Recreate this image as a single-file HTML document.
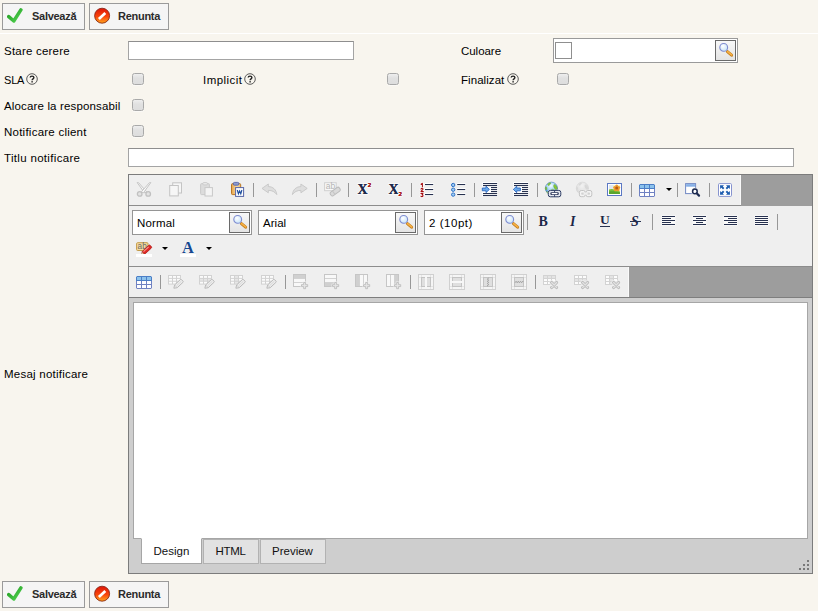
<!DOCTYPE html>
<html>
<head>
<meta charset="utf-8">
<title>Stare cerere</title>
<style>
html,body{margin:0;padding:0;}
body{width:818px;height:611px;overflow:hidden;background:#f8f5ee;position:relative;font-family:"Liberation Sans",sans-serif;font-size:12px;color:#000;}
.abs{position:absolute;}
.hr{position:absolute;left:0;top:33px;width:818px;height:1px;background:#fff;}
.btn{position:absolute;box-sizing:border-box;height:27px;border:1px solid #9a9a9a;background:#f5f5f5;}
.btn span{position:absolute;top:5px;letter-spacing:-0.28px;font-weight:bold;font-size:11px;line-height:14px;color:#2b2b2b;white-space:nowrap;}
.btn svg{position:absolute;}
.lbl{position:absolute;left:4px;font-size:11.5px;line-height:14px;white-space:nowrap;color:#000;}
.inp{position:absolute;box-sizing:border-box;height:19px;border:1px solid #a4a4a4;border-top-color:#8e8e8e;background:#fff;}
.cb{position:absolute;box-sizing:border-box;width:12px;height:12px;border:1px solid #a9a9a9;border-radius:2.5px;background:linear-gradient(#eeeeee,#e1e1e1 40%,#dddddd);box-shadow:0 1px 0 rgba(255,255,255,.45);}
.help{position:absolute;width:12px;height:12px;}
.combo{position:absolute;box-sizing:border-box;height:25px;border:1px solid #959595;background:#fff;}
.combo .t{position:absolute;left:4px;top:5px;font-size:11.5px;line-height:14px;white-space:nowrap;color:#000;}
.cbtn{position:absolute;right:1px;top:1px;box-sizing:border-box;width:21px;height:21px;border:1px solid #6a6a6a;background:linear-gradient(#f8f8f8,#e4e4e4);}
.cbtn svg{position:absolute;left:0;top:0;}
#ed{position:absolute;left:128px;top:174px;width:683px;height:398px;border:1px solid #7c7c7c;background:#9d9d9d;}
.tb{position:absolute;left:0;background:#efefef;}
.sep{position:absolute;width:1px;height:14px;background:#979797;}
.ic{position:absolute;width:16px;height:16px;overflow:visible;}
.arr{position:absolute;width:0;height:0;border-left:3px solid transparent;border-right:3px solid transparent;border-top:3px solid #000;}
.tab{position:absolute;box-sizing:border-box;font-size:11.5px;line-height:14px;color:#111;}
.tab span{position:absolute;top:6px;white-space:nowrap;}
.g{font-family:"Liberation Serif",serif;font-weight:bold;position:absolute;white-space:nowrap;color:#1c2748;text-shadow:0 0 1px #fff,0 0 1px #fff;}
</style>
</head>
<body>
<!-- shared symbols -->
<svg width="0" height="0" style="position:absolute">
  <defs>
    <linearGradient id="gk" x1="0" y1="0" x2="1" y2="1"><stop offset="0" stop-color="#1d9a1d"/><stop offset="1" stop-color="#55d455"/></linearGradient>
    <linearGradient id="gr" x1="0" y1="0" x2="0" y2="1"><stop offset="0" stop-color="#dc1408"/><stop offset=".55" stop-color="#f8450c"/><stop offset="1" stop-color="#ffa51e"/></linearGradient>
    <radialGradient id="lens" cx=".4" cy=".35" r=".7"><stop offset="0" stop-color="#ffffff"/><stop offset="1" stop-color="#c4e2f8"/></radialGradient>
    <g id="mag">
      <path d="M11.4 10.7 L15.6 14.2" stroke="#c27c1c" stroke-width="3" stroke-linecap="round"/>
      <path d="M11.6 10.6 L15.6 13.9" stroke="#f7b144" stroke-width="1.7" stroke-linecap="round"/>
      <circle cx="7.7" cy="6.4" r="3.9" fill="url(#lens)" stroke="#7f8bd0" stroke-width="1.1"/>
    </g>
    <g id="hlp">
      <circle cx="6" cy="6" r="5.3" fill="none" stroke="#4a4a4a" stroke-width=".9"/>
      <path d="M4.2 4.6 C4.2 2.6 7.9 2.6 7.9 4.6 C7.9 5.9 6.1 5.9 6.1 7.3" fill="none" stroke="#222" stroke-width="1.4"/>
      <rect x="5.4" y="8.1" width="1.4" height="1.4" fill="#222"/>
    </g>
    <g id="ok"><path d="M1.7 9.7 L6.8 14 L13.9 2.9" fill="none" stroke="url(#gk)" stroke-width="3.5" stroke-linecap="round" stroke-linejoin="round"/></g>
    <g id="no"><circle cx="9.1" cy="8.7" r="7.5" fill="url(#gr)" stroke="#7c1a0c" stroke-width=".8"/><path d="M5.9 12 L12.3 5.9" stroke="#fff" stroke-width="2.7"/></g>
  </defs>
</svg>

<!-- top buttons -->
<div class="btn" style="left:2px;top:3px;width:83px;">
  <svg width="18" height="18" viewBox="0 0 18 18" style="left:4px;top:3px;"><use href="#ok"/></svg>
  <span style="left:29px;">Salvează</span>
</div>
<div class="btn" style="left:89px;top:3px;width:80px;">
  <svg width="18" height="18" viewBox="0 0 18 18" style="left:3px;top:3px;"><use href="#no"/></svg>
  <span style="left:28px;">Renunta</span>
</div>
<div class="hr"></div>

<!-- form rows -->
<div class="lbl" style="top:44px;letter-spacing:0.21px;">Stare cerere</div>
<div class="inp" style="left:128px;top:41px;width:226px;"></div>
<div class="lbl" style="left:461px;top:44px;letter-spacing:-0.04px;">Culoare</div>
<div class="combo" style="left:553px;top:38px;width:185px;border-color:#9a9a9a;">
  <div class="abs" style="left:1px;top:3px;width:17px;height:17px;box-sizing:border-box;border:1px solid #8f8f8f;background:#fff;"></div>
  <div class="cbtn"><svg width="19" height="19" viewBox="0 0 19 19"><use href="#mag"/></svg></div>
</div>

<div class="lbl" style="top:73px;font-size:11px;letter-spacing:-0.2px;">SLA</div>
<svg class="help" style="left:26px;top:73px;" viewBox="0 0 12 12"><use href="#hlp"/></svg>
<div class="cb" style="left:132px;top:73px;"></div>
<div class="lbl" style="left:203px;top:73px;letter-spacing:0.45px;">Implicit</div>
<svg class="help" style="left:244px;top:73px;" viewBox="0 0 12 12"><use href="#hlp"/></svg>
<div class="cb" style="left:387px;top:73px;"></div>
<div class="lbl" style="left:461px;top:73px;letter-spacing:0.06px;">Finalizat</div>
<svg class="help" style="left:507px;top:73px;" viewBox="0 0 12 12"><use href="#hlp"/></svg>
<div class="cb" style="left:557px;top:73px;"></div>

<div class="lbl" style="top:99px;letter-spacing:0.15px;">Alocare la responsabil</div>
<div class="cb" style="left:132px;top:99px;"></div>
<div class="lbl" style="top:125px;letter-spacing:0.24px;">Notificare client</div>
<div class="cb" style="left:132px;top:125px;"></div>
<div class="lbl" style="top:151px;letter-spacing:0.32px;">Titlu notificare</div>
<div class="inp" style="left:128px;top:148px;width:666px;"></div>
<div class="lbl" style="top:367px;letter-spacing:0.23px;">Mesaj notificare</div>

<!-- editor -->
<div id="ed">
  <div class="tb" style="top:0;width:612px;height:30px;box-shadow:inset -1px 0 0 #fafafa;"></div>
  <div class="abs" style="left:0;top:30px;width:612px;height:1px;background:#8c8c8c;"></div>
  <div class="tb" style="top:31px;width:683px;height:60px;"></div>
  <div class="abs" style="left:0;top:91px;width:683px;height:1px;background:#8c8c8c;"></div>
  <div class="tb" style="top:92px;width:500px;height:30px;box-shadow:inset -1px 0 0 #fafafa;"></div>
  <div class="abs" style="left:0;top:122px;width:683px;height:1px;background:#7e7e7e;"></div>
  <div class="abs" style="left:0;top:123px;width:683px;height:275px;background:#cecece;"></div>
  <div class="abs" style="left:4px;top:127px;width:673px;height:235px;border:1px solid #a6a6a6;background:#fff;"></div>
<svg class="ic" style="left:7px;top:7px;width:16px;height:16px" viewBox="0 0 16 16"><g fill="#fbfbfb" stroke="#c4c4c4" stroke-width="1" stroke-linejoin="round">
<path d="M1.2 .6 L2.4 .5 L10.6 9.8 L8.6 10.9 Z"/><path d="M14.8 .6 L13.6 .5 L5.4 9.8 L7.4 10.9 Z"/>
<circle cx="3.7" cy="11.9" r="2.3" stroke-width="1.3" stroke="#c0c0c0" fill="#e4e4e4"/><circle cx="12.2" cy="11.9" r="2.3" stroke-width="1.3" stroke="#c0c0c0" fill="#e4e4e4"/></g>
<circle cx="3.7" cy="11.9" r=".9" fill="#e2e2e2"/><circle cx="12.2" cy="11.9" r=".9" fill="#e2e2e2"/></svg>
<svg class="ic" style="left:39px;top:7px;width:16px;height:16px" viewBox="0 0 16 16"><g fill="#f6f6f6" stroke="#c4c4c4" stroke-width="1"><rect x="4.7" y=".8" width="8.8" height="10.2"/><rect x="1.7" y="3.5" width="8.6" height="10.4"/></g></svg>
<svg class="ic" style="left:70px;top:7px;width:16px;height:16px" viewBox="0 0 16 16"><rect x="1.6" y="1.6" width="8.8" height="11" rx="1" fill="#dcdcdc" stroke="#cbcbcb"/>
<rect x="3.8" y=".5" width="4.6" height="2.4" rx="1" fill="#e8e8e8" stroke="#c8c8c8" stroke-width=".8"/>
<rect x="6" y="5.6" width="7.4" height="8.4" fill="#f4f4f4" stroke="#c8c8c8"/></svg>
<svg class="ic" style="left:101px;top:7px;width:16px;height:16px" viewBox="0 0 16 16"><defs><linearGradient id="pw" x1="0" y1="0" x2="1" y2="0"><stop offset="0" stop-color="#e6a44a"/><stop offset=".6" stop-color="#f9dca4"/><stop offset="1" stop-color="#efc070"/></linearGradient></defs>
<rect x="1.5" y="1.6" width="9.2" height="11" rx="1.2" fill="url(#pw)" stroke="#b97724"/>
<rect x="3.3" y=".4" width="5.6" height="2.8" rx="1.2" fill="#8d9bd0" stroke="#5664a8" stroke-width=".9"/>
<rect x="5.6" y="5.6" width="8" height="8.8" fill="#fff" stroke="#5665a7"/>
<path d="M7.3 8 L8.4 11.7 L9.6 8.9 L10.8 11.7 L11.9 8" fill="none" stroke="#1f4f9f" stroke-width="1.15" stroke-linejoin="miter"/></svg>
<svg class="ic" style="left:132px;top:7px;width:16px;height:16px" viewBox="0 0 16 16"><path d="M1 6.4 L7.3 2 L7.3 4.6 C12 4.6 15.2 7.6 15.8 12.6 C13.6 9.6 11.2 8.4 7.3 8.4 L7.3 10.8 Z" fill="#dedede" stroke="#c6c6c6" stroke-width=".9" stroke-linejoin="round"/></svg>
<svg class="ic" style="left:163px;top:7px;width:16px;height:16px" viewBox="0 0 16 16"><path d="M15.2 6.4 L8.9 2 L8.9 4.6 C4.2 4.6 1 7.6 .4 12.6 C2.6 9.6 5 8.4 8.9 8.4 L8.9 10.8 Z" fill="#dedede" stroke="#c6c6c6" stroke-width=".9" stroke-linejoin="round"/></svg>
<svg class="ic" style="left:195px;top:7px;width:16px;height:16px" viewBox="0 0 16 16"><rect x=".6" y=".7" width="11.6" height="8" fill="#f8f8f8" stroke="#d0d0d0"/>
<text x="1.8" y="7.2" font-family="Liberation Sans" font-size="8.5" fill="#b4b4b4">ab</text>
<g transform="rotate(-36 11.2 9.6)"><rect x="5.7" y="7.4" width="11" height="4.4" rx="1.6" fill="#dadada" stroke="#bcbcbc"/><path d="M9.4 7.5 V11.7" stroke="#c4c4c4"/></g></svg>
<svg class="ic" style="left:228px;top:7px;width:16px;height:16px" viewBox="0 0 16 16"><text x=".4" y="12" font-family="Liberation Serif" font-weight="bold" font-size="14" fill="#1f2b4c" stroke="#fff" stroke-width="1.6" paint-order="stroke" stroke-opacity=".8">X</text>
<text x=".4" y="12" font-family="Liberation Serif" font-weight="bold" font-size="14" fill="#1f2b4c">X</text>
<text x="10.8" y="5.4" font-family="Liberation Sans" font-weight="bold" font-size="6.2" fill="#a50f12" stroke="#fff" stroke-width="1.4" paint-order="stroke" stroke-opacity=".8">2</text>
<text x="10.8" y="5.4" font-family="Liberation Sans" font-weight="bold" font-size="6.2" fill="#a50f12">2</text></svg>
<svg class="ic" style="left:259px;top:7px;width:16px;height:16px" viewBox="0 0 16 16"><text x=".4" y="12" font-family="Liberation Serif" font-weight="bold" font-size="14" fill="#1f2b4c" stroke="#fff" stroke-width="1.6" paint-order="stroke" stroke-opacity=".8">X</text>
<text x=".4" y="12" font-family="Liberation Serif" font-weight="bold" font-size="14" fill="#1f2b4c">X</text>
<text x="10.6" y="14.3" font-family="Liberation Sans" font-weight="bold" font-size="6.2" fill="#a50f12" stroke="#fff" stroke-width="1.4" paint-order="stroke" stroke-opacity=".8">2</text>
<text x="10.6" y="14.3" font-family="Liberation Sans" font-weight="bold" font-size="6.2" fill="#a50f12">2</text></svg>
<svg class="ic" style="left:291px;top:7px;width:16px;height:16px" viewBox="0 0 16 16"><rect x="4.4" y="1" width="9.399999999999999" height="3" fill="#fff" rx="1"/><rect x="4.4" y="6" width="9.399999999999999" height="3" fill="#fff" rx="1"/><rect x="4.4" y="11" width="9.399999999999999" height="3" fill="#fff" rx="1"/><rect x="5" y="2" width="8.2" height="1.1" fill="#27314f"/><rect x="5" y="7" width="8.2" height="1.1" fill="#27314f"/><rect x="5" y="12" width="8.2" height="1.1" fill="#27314f"/><g fill="none" stroke="#ffffff" stroke-width="2.4" stroke-linejoin="round" stroke-linecap="square"><path d="M1.1 2.2 L2.4 1.3 V4.6"/><path d="M1 7 C1.2 5.9 3.1 5.9 3.1 7.1 C3.1 8 1 8.6 1 9.6 H3.2"/><path d="M1 11.4 H3 L2 12.7 C3.4 12.7 3.4 14.6 2 14.6 C1.5 14.6 1.2 14.5 .9 14.2"/></g><g fill="none" stroke="#a50f12" stroke-width="1.05" stroke-linejoin="round" stroke-linecap="square"><path d="M1.1 2.2 L2.4 1.3 V4.6"/><path d="M1 7 C1.2 5.9 3.1 5.9 3.1 7.1 C3.1 8 1 8.6 1 9.6 H3.2"/><path d="M1 11.4 H3 L2 12.7 C3.4 12.7 3.4 14.6 2 14.6 C1.5 14.6 1.2 14.5 .9 14.2"/></g></svg>
<svg class="ic" style="left:322px;top:7px;width:16px;height:16px" viewBox="0 0 16 16"><rect x="5.6000000000000005" y="1" width="9.2" height="3" fill="#fff" rx="1"/><rect x="5.6000000000000005" y="6" width="9.2" height="3" fill="#fff" rx="1"/><rect x="5.6000000000000005" y="11" width="9.2" height="3" fill="#fff" rx="1"/><rect x="6.2" y="2" width="7.999999999999999" height="1.1" fill="#27314f"/><rect x="6.2" y="7" width="7.999999999999999" height="1.1" fill="#27314f"/><rect x="6.2" y="12" width="7.999999999999999" height="1.1" fill="#27314f"/><circle cx="2.2" cy="3" r="2.3" fill="#fff"/><circle cx="2.2" cy="3" r="1.7" fill="#9fcdf4" stroke="#2d6fc4" stroke-width="1"/><circle cx="2.2" cy="7.7" r="2.3" fill="#fff"/><circle cx="2.2" cy="7.7" r="1.7" fill="#9fcdf4" stroke="#2d6fc4" stroke-width="1"/><circle cx="2.2" cy="12.6" r="2.3" fill="#fff"/><circle cx="2.2" cy="12.6" r="1.7" fill="#9fcdf4" stroke="#2d6fc4" stroke-width="1"/></svg>
<svg class="ic" style="left:353px;top:7px;width:16px;height:16px" viewBox="0 0 16 16"><rect x=".2" y="0" width="15.4" height="15" rx="1" fill="#fff"/><rect x="1" y="1" width="14.1" height="1.1" fill="#27314f"/><rect x="1" y="3" width="14.1" height="1.1" fill="#27314f"/><rect x="9" y="5" width="6.1" height="1.1" fill="#27314f"/><rect x="9" y="7" width="6.1" height="1.1" fill="#27314f"/><rect x="9" y="9" width="6.1" height="1.1" fill="#27314f"/><rect x="1" y="11" width="14.1" height="1.1" fill="#27314f"/><rect x="1" y="13" width="14.1" height="1.1" fill="#27314f"/><path d="M.3 6 H4 V4.2 L7.4 7.4 L4 10.6 V8.8 H.3 Z" fill="#6aa8ea" stroke="#2a68bf" stroke-width=".9" stroke-linejoin="round"/></svg>
<svg class="ic" style="left:384px;top:7px;width:16px;height:16px" viewBox="0 0 16 16"><rect x=".2" y="0" width="15.4" height="15" rx="1" fill="#fff"/><rect x="1" y="1" width="14.1" height="1.1" fill="#27314f"/><rect x="1" y="3" width="14.1" height="1.1" fill="#27314f"/><rect x="9" y="5" width="6.1" height="1.1" fill="#27314f"/><rect x="9" y="7" width="6.1" height="1.1" fill="#27314f"/><rect x="9" y="9" width="6.1" height="1.1" fill="#27314f"/><rect x="1" y="11" width="14.1" height="1.1" fill="#27314f"/><rect x="1" y="13" width="14.1" height="1.1" fill="#27314f"/><path d="M7.4 6 H3.7 V4.2 L.3 7.4 L3.7 10.6 V8.8 H7.4 Z" fill="#6aa8ea" stroke="#2a68bf" stroke-width=".9" stroke-linejoin="round"/></svg>
<svg class="ic" style="left:416px;top:7px;width:16px;height:16px" viewBox="0 0 16 16"><defs><radialGradient id="gl" cx=".46" cy=".3" r=".75"><stop offset="0" stop-color="#f6fdff"/><stop offset=".45" stop-color="#a9d9f8"/><stop offset=".8" stop-color="#4a92de"/><stop offset="1" stop-color="#1f57a8"/></radialGradient></defs>
<circle cx="6.4" cy="6.2" r="6.1" fill="url(#gl)" stroke="#3a6aa8" stroke-width=".5"/>
<g fill="#86c63a" stroke="#5c9c22" stroke-width=".35">
<path d="M2.6 2.4 C3.6 .9 5.6 .5 6 1.2 C5.6 2.2 4.6 2.2 4.2 3.4 C3.4 3.8 2.8 3.2 2.6 2.4 Z"/>
<path d="M.7 5 C1.6 4.6 2.2 5.6 1.9 7 C1.7 8 1 8.2 .5 7.4 C.3 6.6 .4 5.6 .7 5 Z"/>
<path d="M9.2 2.4 C10.6 2.6 12.2 4.4 12.3 6.6 C12 7.8 11 8 10.2 7.4 C10 6.4 9 6.2 8.8 5 C8.4 4 8.6 3 9.2 2.4 Z"/>
<path d="M6.6 7.4 C7.6 7 8.8 7.4 9.2 8.4 C8.4 9 7.2 9 6.6 8.4 Z"/>
<path d="M1.6 9.4 C2.6 9.6 3.4 10.6 3.4 11.6 C2.6 11.4 1.8 10.4 1.6 9.4 Z"/></g>
<rect x="2.7" y="7.8" width="13.7" height="7.6" rx="2.4" fill="#f4f4f4" fill-opacity=".85"/>
<rect x="3.3" y="8.4" width="12.5" height="6.4" rx="2" fill="#e3e7ef" stroke="#2b3a62" stroke-width="1"/>
<rect x="5.3" y="10.3" width="8.5" height="2.6" rx="1.2" fill="#2b3558"/>
<rect x="6.5" y="11" width="6.1" height="1.2" rx=".6" fill="#fff"/>
<path d="M9.55 8.4 V10.4 M9.55 12.8 V14.8" stroke="#2b3a62" stroke-width=".9"/></svg>
<svg class="ic" style="left:447px;top:7px;width:16px;height:16px" viewBox="0 0 16 16"><defs><radialGradient id="gu" cx=".46" cy=".3" r=".75"><stop offset="0" stop-color="#f2f2f2"/><stop offset=".6" stop-color="#e2e2e2"/><stop offset="1" stop-color="#cccccc"/></radialGradient></defs>
<circle cx="6.4" cy="6.2" r="6.1" fill="url(#gu)" stroke="#cfcfcf" stroke-width=".5"/>
<path d="M2.6 2.4 C3.6 .9 5.6 .5 6 1.2 C5.6 2.2 4.6 2.2 4.2 3.4 C3.4 3.8 2.8 3.2 2.6 2.4 Z M9.2 2.4 C10.6 2.6 12.2 4.4 12.3 6.6 C12 7.8 11 8 10.2 7.4 C10 6.4 9 6.2 8.8 5 C8.4 4 8.6 3 9.2 2.4 Z M.7 5 C1.6 4.6 2.2 5.6 1.9 7 C1.7 8 1 8.2 .5 7.4 Z" fill="#d8d8d8"/>
<rect x="2.7" y="7.8" width="13.7" height="7.6" rx="2.4" fill="#f1f1f1" fill-opacity=".9"/>
<rect x="3.4" y="8.5" width="5.8" height="6.2" rx="1.8" fill="#f4f4f4" stroke="#c3c3c3" stroke-width="1"/>
<rect x="10" y="8.5" width="5.8" height="6.2" rx="1.8" fill="#f4f4f4" stroke="#c3c3c3" stroke-width="1"/>
<rect x="5.2" y="10.4" width="3" height="2.4" rx=".8" fill="#d2d2d2"/>
<rect x="11" y="10.4" width="3" height="2.4" rx=".8" fill="#d2d2d2"/>
<rect x="7.6" y="10.5" width="4" height="2.2" fill="#efefef"/></svg>
<svg class="ic" style="left:478px;top:7px;width:16px;height:16px" viewBox="0 0 16 16"><rect x=".5" y="1.5" width="14" height="12" fill="#fff" stroke="#5b78c4"/>
<rect x="2" y="3" width="11" height="9" fill="#f1f2cf"/>
<rect x="2" y="3" width="4" height="4" fill="#dfe8f0"/>
<path d="M2 7.6 C4 6.6 6 6.8 7.6 7.8 L13 9.6 V12 H2 Z" fill="#7bbf3c"/>
<path d="M2 9.8 C5 8.8 9 9.6 13 10.6 V12 H2 Z" fill="#5aa52c"/>
<g fill="#ee9a2c"><circle cx="9.7" cy="3.9" r="1.5"/><circle cx="7.7" cy="5.4" r="1.5"/><circle cx="11.7" cy="5.4" r="1.5"/><circle cx="8.4" cy="7.7" r="1.5"/><circle cx="11" cy="7.7" r="1.5"/></g>
<circle cx="9.7" cy="6" r="1.5" fill="#b85a14"/></svg>
<svg class="ic" style="left:510px;top:7px;width:16px;height:16px" viewBox="0 0 16 16"><rect x="0" y="2" width="16" height="5" fill="#4b7ec6"/><rect x="0" y="7" width="16" height="8" fill="#6f81c2"/><rect x="1" y="3" width="4" height="3" fill="#8cc2ec"/><rect x="1" y="7" width="4" height="3" fill="#fdfdff"/><rect x="1" y="11" width="4" height="3" fill="#fdfdff"/><rect x="6" y="3" width="4" height="3" fill="#8cc2ec"/><rect x="6" y="7" width="4" height="3" fill="#fdfdff"/><rect x="6" y="11" width="4" height="3" fill="#fdfdff"/><rect x="11" y="3" width="4" height="3" fill="#8cc2ec"/><rect x="11" y="7" width="4" height="3" fill="#fdfdff"/><rect x="11" y="11" width="4" height="3" fill="#fdfdff"/><rect x="0" y="2" width="1" height="1" fill="#efefef" fill-opacity=".6"/><rect x="15" y="2" width="1" height="1" fill="#efefef" fill-opacity=".6"/><rect x="0" y="14" width="1" height="1" fill="#efefef" fill-opacity=".6"/><rect x="15" y="14" width="1" height="1" fill="#efefef" fill-opacity=".6"/></svg>
<svg class="ic" style="left:555px;top:7px;width:16px;height:16px" viewBox="0 0 16 16"><rect x="1.6" y="1.6" width="10" height="10" fill="#fff" stroke="#7289c4"/>
<rect x="2.1" y="2.1" width="9" height="2.6" fill="#86b0e6"/>
<circle cx="10.9" cy="9.4" r="3.6" fill="#efefef"/>
<path d="M12.4 11 L15.2 13.8" stroke="#efefef" stroke-width="4" stroke-linecap="round"/>
<circle cx="10.9" cy="9.4" r="2.3" fill="#fff" stroke="#1c2a50" stroke-width="1.5"/>
<path d="M12.7 11.3 L15 13.6" stroke="#1c2a50" stroke-width="2.2" stroke-linecap="round"/></svg>
<svg class="ic" style="left:588px;top:7px;width:16px;height:16px" viewBox="0 0 16 16"><rect x="1.5" y="1.6" width="13" height="12.8" rx="1" fill="#fff" stroke="#8693cf"/>
<g fill="#1f5eb0"><path d="M3 3.2 H7 L5.8 4.4 L7.4 6 L6 7.4 L4.4 5.8 L3.2 7 Z"/><path d="M13 3.2 H9 L10.2 4.4 L8.6 6 L10 7.4 L11.6 5.8 L12.8 7 Z"/>
<path d="M3 12.8 H7 L5.8 11.6 L7.4 10 L6 8.6 L4.4 10.2 L3.2 9 Z"/><path d="M13 12.8 H9 L10.2 11.6 L8.6 10 L10 8.6 L11.6 10.2 L12.8 9 Z"/></g></svg>
<div class="sep" style="left:124px;top:8px;height:14px"></div>
<div class="sep" style="left:187px;top:8px;height:14px"></div>
<div class="sep" style="left:219px;top:8px;height:14px"></div>
<div class="sep" style="left:282px;top:8px;height:14px"></div>
<div class="sep" style="left:345px;top:8px;height:14px"></div>
<div class="sep" style="left:408px;top:8px;height:14px"></div>
<div class="sep" style="left:502px;top:8px;height:14px"></div>
<div class="sep" style="left:548px;top:8px;height:14px"></div>
<div class="sep" style="left:580px;top:8px;height:14px"></div>
<div class="arr" style="left:537px;top:13px"></div>
<div class="combo" style="left:3px;top:35px;width:120px"><div class="t" style="letter-spacing:0.16px">Normal</div><div class="cbtn"><svg width="19" height="19" viewBox="0 0 19 19"><use href="#mag"/></svg></div></div>
<div class="combo" style="left:129px;top:35px;width:160px"><div class="t" style="letter-spacing:0.04px">Arial</div><div class="cbtn"><svg width="19" height="19" viewBox="0 0 19 19"><use href="#mag"/></svg></div></div>
<div class="combo" style="left:295px;top:35px;width:100px"><div class="t" style="letter-spacing:0.54px">2 (10pt)</div><div class="cbtn"><svg width="19" height="19" viewBox="0 0 19 19"><use href="#mag"/></svg></div></div>
<div class="sep" style="left:398px;top:39px;height:16px"></div>
<div class="sep" style="left:523px;top:39px;height:16px"></div>
<div class="sep" style="left:648px;top:39px;height:16px"></div>
<div class="g" style="left:409.5px;top:39.5px;font-size:14px;line-height:14px;">B</div>
<div class="g" style="left:441px;top:39.5px;font-size:14px;line-height:14px;font-style:italic;">I</div>
<div class="g" style="left:471px;top:38px;font-size:13.5px;line-height:13.5px;">U</div>
<div class="abs" style="left:471px;top:51px;width:10px;height:1px;background:#27314f"></div>
<div class="g" style="left:502px;top:39.5px;font-size:14px;line-height:14px;font-style:italic;">S</div>
<div class="abs" style="left:501px;top:46px;width:11px;height:1px;background:#27314f"></div>
<svg class="ic" style="left:533px;top:40px;width:13px;height:11px" viewBox="0 0 13 11"><rect x="-.5" y=".2" width="14" height="10.6" fill="#fbfbfb" fill-opacity=".9"/><rect x="0" y="1" width="13" height="1" fill="#27314f"/><rect x="0" y="3" width="9" height="1" fill="#27314f"/><rect x="0" y="5" width="13" height="1" fill="#27314f"/><rect x="0" y="7" width="9" height="1" fill="#27314f"/><rect x="0" y="9" width="13" height="1" fill="#27314f"/></svg>
<svg class="ic" style="left:564px;top:40px;width:13px;height:11px" viewBox="0 0 13 11"><rect x="-.5" y=".2" width="14" height="10.6" fill="#fbfbfb" fill-opacity=".9"/><rect x="0" y="1" width="13" height="1" fill="#27314f"/><rect x="3" y="3" width="7" height="1" fill="#27314f"/><rect x="0" y="5" width="13" height="1" fill="#27314f"/><rect x="3" y="7" width="7" height="1" fill="#27314f"/><rect x="0" y="9" width="13" height="1" fill="#27314f"/></svg>
<svg class="ic" style="left:594.5px;top:40px;width:13px;height:11px" viewBox="0 0 13 11"><rect x="-.5" y=".2" width="14" height="10.6" fill="#fbfbfb" fill-opacity=".9"/><rect x="0" y="1" width="13" height="1" fill="#27314f"/><rect x="4" y="3" width="9" height="1" fill="#27314f"/><rect x="0" y="5" width="13" height="1" fill="#27314f"/><rect x="4" y="7" width="9" height="1" fill="#27314f"/><rect x="0" y="9" width="13" height="1" fill="#27314f"/></svg>
<svg class="ic" style="left:625.5px;top:40px;width:13px;height:11px" viewBox="0 0 13 11"><rect x="-.5" y=".2" width="14" height="10.6" fill="#fbfbfb" fill-opacity=".9"/><rect x="0" y="1" width="13" height="1" fill="#27314f"/><rect x="0" y="3" width="13" height="1" fill="#27314f"/><rect x="0" y="5" width="13" height="1" fill="#27314f"/><rect x="0" y="7" width="13" height="1" fill="#27314f"/><rect x="0" y="9" width="13" height="1" fill="#27314f"/></svg>
<svg class="ic" style="left:7px;top:67px;width:16px;height:16px" viewBox="0 0 16 16"><rect x=".6" y=".7" width="11.4" height="7.8" rx="1" fill="#f4dca0" stroke="#c39a48"/>
<text x="1.6" y="7" font-family="Liberation Sans" font-size="8.2" fill="#6a6a6a">ab</text>
<g transform="rotate(-43 11 7.5)"><rect x="5.6" y="5.6" width="10.6" height="3.8" rx="1.2" fill="#e02a26" stroke="#a81414" stroke-width=".7"/><rect x="7" y="6.2" width="7" height="1" fill="#f69a94"/><path d="M5.6 5.8 L3.2 7.5 L5.6 9.2 Z" fill="#f0c8a0" stroke="#a0705a" stroke-width=".5"/><path d="M3.8 7 L2.8 7.5 L3.8 8 Z" fill="#c01010"/></g></svg>
<div class="abs" style="left:7px;top:79px;width:16px;height:3px;background:#fff"></div>
<div class="arr" style="left:33px;top:72px"></div>
<div class="g" style="left:53px;top:64.5px;font-size:16.4px;line-height:16.4px;color:#17488f;">A</div>
<div class="abs" style="left:51px;top:79px;width:16px;height:3px;background:#fff"></div>
<div class="arr" style="left:77px;top:72px"></div>
<svg class="ic" style="left:7px;top:99px;width:16px;height:16px" viewBox="0 0 16 16"><rect x="0" y="2" width="16" height="5" fill="#4b7ec6"/><rect x="0" y="7" width="16" height="8" fill="#6f81c2"/><rect x="1" y="3" width="4" height="3" fill="#8cc2ec"/><rect x="1" y="7" width="4" height="3" fill="#fdfdff"/><rect x="1" y="11" width="4" height="3" fill="#fdfdff"/><rect x="6" y="3" width="4" height="3" fill="#8cc2ec"/><rect x="6" y="7" width="4" height="3" fill="#fdfdff"/><rect x="6" y="11" width="4" height="3" fill="#fdfdff"/><rect x="11" y="3" width="4" height="3" fill="#8cc2ec"/><rect x="11" y="7" width="4" height="3" fill="#fdfdff"/><rect x="11" y="11" width="4" height="3" fill="#fdfdff"/><rect x="0" y="2" width="1" height="1" fill="#efefef" fill-opacity=".6"/><rect x="15" y="2" width="1" height="1" fill="#efefef" fill-opacity=".6"/><rect x="0" y="14" width="1" height="1" fill="#efefef" fill-opacity=".6"/><rect x="15" y="14" width="1" height="1" fill="#efefef" fill-opacity=".6"/></svg>
<div class="sep" style="left:31px;top:100px;height:14px"></div>
<div class="sep" style="left:156px;top:100px;height:14px"></div>
<div class="sep" style="left:281px;top:100px;height:14px"></div>
<div class="sep" style="left:406px;top:100px;height:14px"></div>
<svg class="ic" style="left:39px;top:99px;width:16px;height:16px" viewBox="0 0 16 16"><rect x="0" y="1" width="13" height="9.6" fill="#d2d2d2"/><rect x="1.00" y="2.00" width="3.00" height="1.87" fill="#fbfbfb"/><rect x="5.00" y="2.00" width="3.00" height="1.87" fill="#fbfbfb"/><rect x="9.00" y="2.00" width="3.00" height="1.87" fill="#fbfbfb"/><rect x="1.00" y="4.87" width="3.00" height="1.87" fill="#fbfbfb"/><rect x="5.00" y="4.87" width="3.00" height="1.87" fill="#fbfbfb"/><rect x="9.00" y="4.87" width="3.00" height="1.87" fill="#fbfbfb"/><rect x="1.00" y="7.73" width="3.00" height="1.87" fill="#fbfbfb"/><rect x="5.00" y="7.73" width="3.00" height="1.87" fill="#fbfbfb"/><rect x="9.00" y="7.73" width="3.00" height="1.87" fill="#fbfbfb"/><g transform="rotate(-43 10.4 10)"><path d="M4.2 10 L7 8.1 H14.8 Q15.7 8.1 15.7 9 V11 Q15.7 11.9 14.8 11.9 H7 Z" fill="#ececec" stroke="#b7b7b7" stroke-width=".9" stroke-linejoin="round"/><path d="M7 8.3 V11.7" stroke="#c4c4c4" stroke-width=".7"/><path d="M8 10 H14.4" stroke="#d0d0d0" stroke-width=".7"/></g></svg>
<svg class="ic" style="left:70px;top:99px;width:16px;height:16px" viewBox="0 0 16 16"><rect x="0" y="1" width="13" height="9.6" fill="#d2d2d2"/><rect x="1.00" y="2.00" width="3.00" height="1.87" fill="#fbfbfb"/><rect x="5.00" y="2.00" width="3.00" height="1.87" fill="#fbfbfb"/><rect x="9.00" y="2.00" width="3.00" height="1.87" fill="#fbfbfb"/><rect x="1.00" y="4.87" width="3.00" height="1.87" fill="#e6e6e6"/><rect x="5.00" y="4.87" width="3.00" height="1.87" fill="#e6e6e6"/><rect x="9.00" y="4.87" width="3.00" height="1.87" fill="#e6e6e6"/><rect x="1.00" y="7.73" width="3.00" height="1.87" fill="#fbfbfb"/><rect x="5.00" y="7.73" width="3.00" height="1.87" fill="#fbfbfb"/><rect x="9.00" y="7.73" width="3.00" height="1.87" fill="#fbfbfb"/><g transform="rotate(-43 10.4 10)"><path d="M4.2 10 L7 8.1 H14.8 Q15.7 8.1 15.7 9 V11 Q15.7 11.9 14.8 11.9 H7 Z" fill="#ececec" stroke="#b7b7b7" stroke-width=".9" stroke-linejoin="round"/><path d="M7 8.3 V11.7" stroke="#c4c4c4" stroke-width=".7"/><path d="M8 10 H14.4" stroke="#d0d0d0" stroke-width=".7"/></g></svg>
<svg class="ic" style="left:101px;top:99px;width:16px;height:16px" viewBox="0 0 16 16"><rect x="0" y="1" width="13" height="9.6" fill="#d2d2d2"/><rect x="1.00" y="2.00" width="3.00" height="1.87" fill="#fbfbfb"/><rect x="5.00" y="2.00" width="3.00" height="1.87" fill="#e6e6e6"/><rect x="9.00" y="2.00" width="3.00" height="1.87" fill="#fbfbfb"/><rect x="1.00" y="4.87" width="3.00" height="1.87" fill="#fbfbfb"/><rect x="5.00" y="4.87" width="3.00" height="1.87" fill="#e6e6e6"/><rect x="9.00" y="4.87" width="3.00" height="1.87" fill="#fbfbfb"/><rect x="1.00" y="7.73" width="3.00" height="1.87" fill="#fbfbfb"/><rect x="5.00" y="7.73" width="3.00" height="1.87" fill="#e6e6e6"/><rect x="9.00" y="7.73" width="3.00" height="1.87" fill="#fbfbfb"/><g transform="rotate(-43 10.4 10)"><path d="M4.2 10 L7 8.1 H14.8 Q15.7 8.1 15.7 9 V11 Q15.7 11.9 14.8 11.9 H7 Z" fill="#ececec" stroke="#b7b7b7" stroke-width=".9" stroke-linejoin="round"/><path d="M7 8.3 V11.7" stroke="#c4c4c4" stroke-width=".7"/><path d="M8 10 H14.4" stroke="#d0d0d0" stroke-width=".7"/></g></svg>
<svg class="ic" style="left:132px;top:99px;width:16px;height:16px" viewBox="0 0 16 16"><rect x="0" y="1" width="13" height="9.6" fill="#d2d2d2"/><rect x="1.00" y="2.00" width="3.00" height="1.87" fill="#fbfbfb"/><rect x="5.00" y="2.00" width="3.00" height="1.87" fill="#fbfbfb"/><rect x="9.00" y="2.00" width="3.00" height="1.87" fill="#fbfbfb"/><rect x="1.00" y="4.87" width="3.00" height="1.87" fill="#fbfbfb"/><rect x="5.00" y="4.87" width="3.00" height="1.87" fill="#fbfbfb"/><rect x="9.00" y="4.87" width="3.00" height="1.87" fill="#fbfbfb"/><rect x="1.00" y="7.73" width="3.00" height="1.87" fill="#fbfbfb"/><rect x="5.00" y="7.73" width="3.00" height="1.87" fill="#fbfbfb"/><rect x="9.00" y="7.73" width="3.00" height="1.87" fill="#fbfbfb"/><g transform="rotate(-43 10.4 10)"><path d="M4.2 10 L7 8.1 H14.8 Q15.7 8.1 15.7 9 V11 Q15.7 11.9 14.8 11.9 H7 Z" fill="#ececec" stroke="#b7b7b7" stroke-width=".9" stroke-linejoin="round"/><path d="M7 8.3 V11.7" stroke="#c4c4c4" stroke-width=".7"/><path d="M8 10 H14.4" stroke="#d0d0d0" stroke-width=".7"/></g></svg>
<svg class="ic" style="left:164px;top:99px;width:16px;height:16px" viewBox="0 0 16 16"><rect x=".5" y=".5" width="12" height="12" fill="#f8f8f8" stroke="#c6c6c6"/><path d="M1 4.5 H12 M1 8.5 H12" stroke="#d2d2d2" stroke-width="1"/><rect x="1" y="1" width="11" height="3" fill="#d0d0d0"/><path d="M10.65 8.5 H12.549999999999999 V10.65 H14.7 V12.549999999999999 H12.549999999999999 V14.7 H10.65 V12.549999999999999 H8.5 V10.65 H10.65 Z" fill="#efefef" stroke="#efefef" stroke-width="1.8"/><path d="M10.65 8.5 H12.549999999999999 V10.65 H14.7 V12.549999999999999 H12.549999999999999 V14.7 H10.65 V12.549999999999999 H8.5 V10.65 H10.65 Z" fill="#e6e6e6" stroke="#b9b9b9" stroke-width=".8"/></svg>
<svg class="ic" style="left:195px;top:99px;width:16px;height:16px" viewBox="0 0 16 16"><rect x=".5" y=".5" width="12" height="12" fill="#f8f8f8" stroke="#c6c6c6"/><path d="M1 4.5 H12 M1 8.5 H12" stroke="#d2d2d2" stroke-width="1"/><rect x="1" y="9" width="11" height="3" fill="#d0d0d0"/><path d="M10.65 8.5 H12.549999999999999 V10.65 H14.7 V12.549999999999999 H12.549999999999999 V14.7 H10.65 V12.549999999999999 H8.5 V10.65 H10.65 Z" fill="#efefef" stroke="#efefef" stroke-width="1.8"/><path d="M10.65 8.5 H12.549999999999999 V10.65 H14.7 V12.549999999999999 H12.549999999999999 V14.7 H10.65 V12.549999999999999 H8.5 V10.65 H10.65 Z" fill="#e6e6e6" stroke="#b9b9b9" stroke-width=".8"/></svg>
<svg class="ic" style="left:226px;top:99px;width:16px;height:16px" viewBox="0 0 16 16"><rect x=".5" y=".5" width="12" height="12" fill="#f8f8f8" stroke="#c6c6c6"/><path d="M4.5 1 V12 M8.5 1 V12" stroke="#d2d2d2" stroke-width="1"/><rect x="1" y="1" width="3" height="11" fill="#d0d0d0"/><path d="M10.65 8.5 H12.549999999999999 V10.65 H14.7 V12.549999999999999 H12.549999999999999 V14.7 H10.65 V12.549999999999999 H8.5 V10.65 H10.65 Z" fill="#efefef" stroke="#efefef" stroke-width="1.8"/><path d="M10.65 8.5 H12.549999999999999 V10.65 H14.7 V12.549999999999999 H12.549999999999999 V14.7 H10.65 V12.549999999999999 H8.5 V10.65 H10.65 Z" fill="#e6e6e6" stroke="#b9b9b9" stroke-width=".8"/></svg>
<svg class="ic" style="left:257px;top:99px;width:16px;height:16px" viewBox="0 0 16 16"><rect x=".5" y=".5" width="12" height="12" fill="#f8f8f8" stroke="#c6c6c6"/><path d="M4.5 1 V12 M8.5 1 V12" stroke="#d2d2d2" stroke-width="1"/><rect x="9" y="1" width="3" height="11" fill="#d0d0d0"/><path d="M10.65 8.5 H12.549999999999999 V10.65 H14.7 V12.549999999999999 H12.549999999999999 V14.7 H10.65 V12.549999999999999 H8.5 V10.65 H10.65 Z" fill="#efefef" stroke="#efefef" stroke-width="1.8"/><path d="M10.65 8.5 H12.549999999999999 V10.65 H14.7 V12.549999999999999 H12.549999999999999 V14.7 H10.65 V12.549999999999999 H8.5 V10.65 H10.65 Z" fill="#e6e6e6" stroke="#b9b9b9" stroke-width=".8"/></svg>
<svg class="ic" style="left:289px;top:99px;width:16px;height:16px" viewBox="0 0 16 16"><rect x=".5" y=".5" width="15" height="15" fill="#f5f5f5" stroke="#d0d0d0"/><path d="M3.5 1 V15 M12.5 1 V15 M1 3.5 H15 M1 12.5 H15" stroke="#e5e5e5" stroke-width="1" fill="none"/><rect x="3.5" y="3.5" width="9" height="9" fill="#dfdfdf" stroke="#c3c3c3"/><rect x="7" y="1.2" width="2" height="13.6" fill="#f7f7f7"/></svg>
<svg class="ic" style="left:320px;top:99px;width:16px;height:16px" viewBox="0 0 16 16"><rect x=".5" y=".5" width="15" height="15" fill="#f5f5f5" stroke="#d0d0d0"/><path d="M3.5 1 V15 M12.5 1 V15 M1 3.5 H15 M1 12.5 H15" stroke="#e5e5e5" stroke-width="1" fill="none"/><rect x="3.5" y="3.5" width="9" height="9" fill="#dfdfdf" stroke="#c3c3c3"/><rect x="1.2" y="7" width="13.6" height="2" fill="#f7f7f7"/></svg>
<svg class="ic" style="left:351px;top:99px;width:16px;height:16px" viewBox="0 0 16 16"><rect x=".5" y=".5" width="15" height="15" fill="#f5f5f5" stroke="#d0d0d0"/><path d="M3.5 1 V15 M12.5 1 V15 M1 3.5 H15 M1 12.5 H15" stroke="#e5e5e5" stroke-width="1" fill="none"/><rect x="3.5" y="3.5" width="9" height="9" fill="#dfdfdf" stroke="#c3c3c3"/><path d="M8.8 4 L7.2 5.1 L8.8 6.2 L7.2 7.3 L8.8 8.4 L7.2 9.5 L8.8 10.6 L7.2 11.7 L8 12.2" stroke="#9e9e9e" stroke-width=".9" fill="none"/></svg>
<svg class="ic" style="left:382px;top:99px;width:16px;height:16px" viewBox="0 0 16 16"><rect x=".5" y=".5" width="15" height="15" fill="#f5f5f5" stroke="#d0d0d0"/><path d="M3.5 1 V15 M12.5 1 V15 M1 3.5 H15 M1 12.5 H15" stroke="#e5e5e5" stroke-width="1" fill="none"/><rect x="3.5" y="3.5" width="9" height="9" fill="#dfdfdf" stroke="#c3c3c3"/><path d="M4 8.8 L5.1 7.2 L6.2 8.8 L7.3 7.2 L8.4 8.8 L9.5 7.2 L10.6 8.8 L11.7 7.2 L12.2 8" stroke="#9e9e9e" stroke-width=".9" fill="none"/></svg>
<svg class="ic" style="left:413px;top:99px;width:16px;height:16px" viewBox="0 0 16 16"><rect x="1" y="1" width="13" height="10" fill="#d3d3d3"/><rect x="2" y="2" width="3" height="2" fill="#e4e4e4"/><rect x="6" y="2" width="3" height="2" fill="#e4e4e4"/><rect x="10" y="2" width="3" height="2" fill="#e4e4e4"/><rect x="2" y="5" width="3" height="2" fill="#fcfcfc"/><rect x="6" y="5" width="3" height="2" fill="#fcfcfc"/><rect x="10" y="5" width="3" height="2" fill="#fcfcfc"/><rect x="2" y="8" width="3" height="2" fill="#fcfcfc"/><rect x="6" y="8" width="3" height="2" fill="#fcfcfc"/><rect x="10" y="8" width="3" height="2" fill="#fcfcfc"/><path d="M9.6 8.5 L14.6 13.5 M14.6 8.5 L9.6 13.5" stroke="#efefef" stroke-width="4.6" stroke-linecap="round"/><path d="M9.6 8.5 L14.6 13.5 M14.6 8.5 L9.6 13.5" stroke="#b8b8b8" stroke-width="3.1" stroke-linecap="round"/><path d="M9.6 8.5 L14.6 13.5 M14.6 8.5 L9.6 13.5" stroke="#e2e2e2" stroke-width="1.4" stroke-linecap="round"/></svg>
<svg class="ic" style="left:444px;top:99px;width:16px;height:16px" viewBox="0 0 16 16"><rect x="1" y="1" width="13" height="10" fill="#d3d3d3"/><rect x="2" y="2" width="3" height="2" fill="#fcfcfc"/><rect x="6" y="2" width="3" height="2" fill="#fcfcfc"/><rect x="10" y="2" width="3" height="2" fill="#fcfcfc"/><rect x="2" y="5" width="3" height="2" fill="#e4e4e4"/><rect x="6" y="5" width="3" height="2" fill="#e4e4e4"/><rect x="10" y="5" width="3" height="2" fill="#e4e4e4"/><rect x="2" y="8" width="3" height="2" fill="#fcfcfc"/><rect x="6" y="8" width="3" height="2" fill="#fcfcfc"/><rect x="10" y="8" width="3" height="2" fill="#fcfcfc"/><path d="M9.6 8.5 L14.6 13.5 M14.6 8.5 L9.6 13.5" stroke="#efefef" stroke-width="4.6" stroke-linecap="round"/><path d="M9.6 8.5 L14.6 13.5 M14.6 8.5 L9.6 13.5" stroke="#b8b8b8" stroke-width="3.1" stroke-linecap="round"/><path d="M9.6 8.5 L14.6 13.5 M14.6 8.5 L9.6 13.5" stroke="#e2e2e2" stroke-width="1.4" stroke-linecap="round"/></svg>
<svg class="ic" style="left:475px;top:99px;width:16px;height:16px" viewBox="0 0 16 16"><rect x="1" y="1" width="13" height="10" fill="#d3d3d3"/><rect x="2" y="2" width="3" height="2" fill="#fcfcfc"/><rect x="6" y="2" width="3" height="2" fill="#e4e4e4"/><rect x="10" y="2" width="3" height="2" fill="#fcfcfc"/><rect x="2" y="5" width="3" height="2" fill="#fcfcfc"/><rect x="6" y="5" width="3" height="2" fill="#e4e4e4"/><rect x="10" y="5" width="3" height="2" fill="#fcfcfc"/><rect x="2" y="8" width="3" height="2" fill="#fcfcfc"/><rect x="6" y="8" width="3" height="2" fill="#e4e4e4"/><rect x="10" y="8" width="3" height="2" fill="#fcfcfc"/><path d="M9.6 8.5 L14.6 13.5 M14.6 8.5 L9.6 13.5" stroke="#efefef" stroke-width="4.6" stroke-linecap="round"/><path d="M9.6 8.5 L14.6 13.5 M14.6 8.5 L9.6 13.5" stroke="#b8b8b8" stroke-width="3.1" stroke-linecap="round"/><path d="M9.6 8.5 L14.6 13.5 M14.6 8.5 L9.6 13.5" stroke="#e2e2e2" stroke-width="1.4" stroke-linecap="round"/></svg>
<div class="tab" style="left:12px;top:363px;width:61px;height:26px;background:#fff;border:1px solid #a6a6a6;border-top:1px solid #fff;"><span style="left:11.5px;top:5px">Design</span></div>
<div class="tab" style="left:74px;top:364px;width:56px;height:25px;background:#e2e2e2;border:1px solid #b2b2b2;"><span style="left:11.5px;top:4px;letter-spacing:-0.3px">HTML</span></div>
<div class="tab" style="left:131px;top:364px;width:66px;height:25px;background:#e2e2e2;border:1px solid #b2b2b2;"><span style="left:11px;top:4px">Preview</span></div>
<div class="abs" style="left:678px;top:385px;width:2px;height:2px;background:#787878"></div>
<div class="abs" style="left:674px;top:389px;width:2px;height:2px;background:#787878"></div>
<div class="abs" style="left:678px;top:389px;width:2px;height:2px;background:#787878"></div>
<div class="abs" style="left:670px;top:393px;width:2px;height:2px;background:#787878"></div>
<div class="abs" style="left:674px;top:393px;width:2px;height:2px;background:#787878"></div>
<div class="abs" style="left:678px;top:393px;width:2px;height:2px;background:#787878"></div>
</div>

<!-- bottom buttons -->
<div class="btn" style="left:2px;top:581px;width:83px;">
  <svg width="18" height="18" viewBox="0 0 18 18" style="left:4px;top:3px;"><use href="#ok"/></svg>
  <span style="left:29px;">Salvează</span>
</div>
<div class="btn" style="left:89px;top:581px;width:80px;">
  <svg width="18" height="18" viewBox="0 0 18 18" style="left:3px;top:3px;"><use href="#no"/></svg>
  <span style="left:28px;">Renunta</span>
</div>

</body>
</html>
